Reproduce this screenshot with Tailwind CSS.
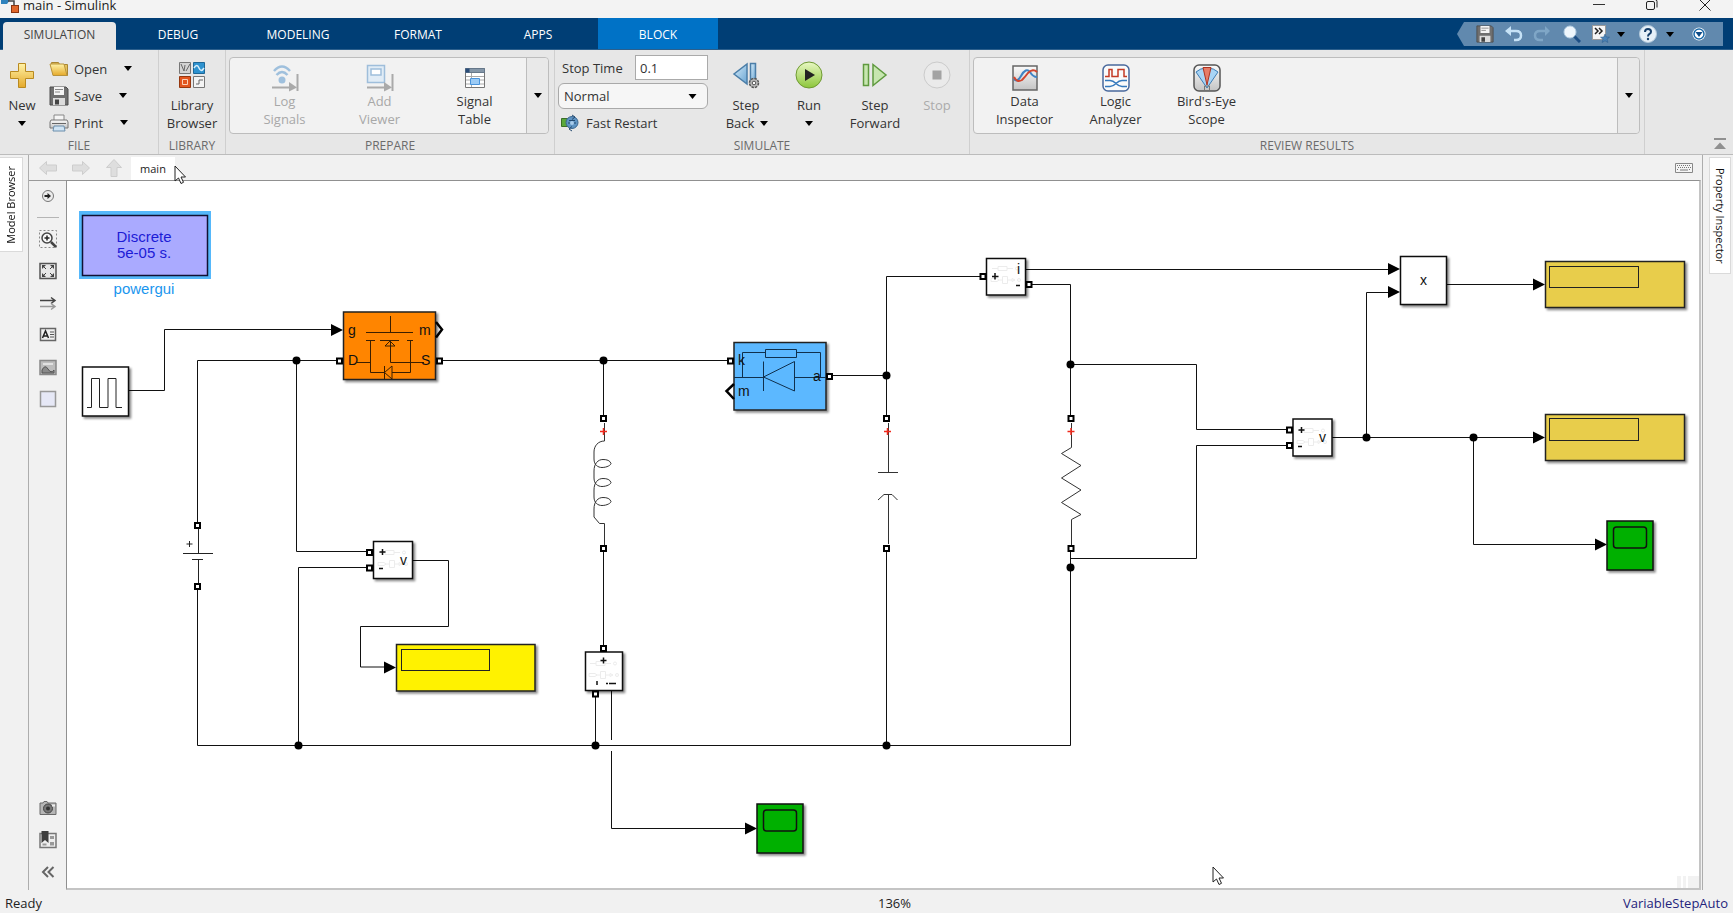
<!DOCTYPE html>
<html lang="en">

<head>
  <meta charset="UTF-8" />
  <meta name="viewport" content="width=device-width, initial-scale=1.0" />
  <title>main - Simulink</title>
  <script src="https://cdn.jsdelivr.net/npm/@tailwindcss/browser@4"></script>
</head>

<body class="h-screen flex flex-col overflow-hidden bg-[#f1f1f1] text-[13px] leading-[18px] text-[#333] font-['Open_Sans','Noto_Sans',sans-serif]">
  <!-- Shared icon parts -->
  <svg class="absolute w-0 h-0">
    <defs>
      <linearGradient id="gold" x1="0" y1="0" x2="0" y2="1">
        <stop offset="0" stop-color="#fff3a8" />
        <stop offset="1" stop-color="#e5a92a" />
      </linearGradient>
      <linearGradient id="blue" x1="0" y1="0" x2="1" y2="1">
        <stop offset="0" stop-color="#d5ecfa" />
        <stop offset="1" stop-color="#69a5d3" />
      </linearGradient>
      <linearGradient id="green" x1="0" y1="0" x2="0" y2="1">
        <stop offset="0" stop-color="#e9f8c4" />
        <stop offset="1" stop-color="#8cc63a" />
      </linearGradient>
      <linearGradient id="gray" x1="0" y1="0" x2="0" y2="1">
        <stop offset="0" stop-color="#fafafa" />
        <stop offset="1" stop-color="#c4c4c4" />
      </linearGradient>
      <filter id="shadow" x="-20%" y="-20%" width="150%" height="150%">
        <feDropShadow dx="2" dy="2" stdDeviation="1.2" flood-color="#000" flood-opacity="0.45" />
      </filter>
      <symbol id="caret" viewBox="0 0 8 5">
        <path d="M0 0h8L4 5z" fill="#000" />
      </symbol>
      <symbol id="floppy" viewBox="0 0 20 20">
        <path d="M1 1h16l2 2v16H1z" fill="#6f6f6f" stroke="#4d4d4d" />
        <path d="M5 1h10v8H5z" fill="#f4f4f4" />
        <path d="M6 3.500h8M6 6h5" stroke="#888" />
        <path d="M4 12h12v7H4z" fill="#dcdcdc" />
        <path d="M6 13.500h4v5H6z" fill="#444" />
      </symbol>
      <symbol id="pointer" viewBox="0 0 12 20">
        <path d="M1 1v15l3.500-3 2.500 5.500 2.500-1.200L7 12h4.500z" fill="#fff" stroke="#222" />
      </symbol>
      <g id="port">
        <rect x="-3.500" y="-3.500" width="7" height="7" fill="#000" />
        <rect x="-1.500" y="-1.500" width="3" height="3" fill="#fff" />
      </g>
      <circle id="dot" r="4" fill="#000" />
      <path id="arrow" d="M-12-6L0 0l-12 6z" fill="#000" />
      <g id="sensor" fill="none" stroke="#ececec">
        <path d="M5 11.500h6M11 9.500h9v4h-9zM20 11.500h6" />
        <circle cx="30" cy="11.500" r="1.500" />
        <path d="M4 21.500h6l2 1.500-2 1.500H4zM12 23h3M15.500 19.500h5v7h-5zM21 23h4M25 21.500l3 1.500-3 1.500z" />
        <circle cx="32" cy="23" r="1.500" />
      </g>
      <g id="scope">
        <rect width="46" height="49" fill="#00b000" stroke="#111" stroke-width="1.500" filter="url(#shadow)" />
        <rect x="6.500" y="6" width="33" height="21" rx="3" fill="none" stroke="#111" stroke-width="1.500" />
      </g>
    </defs>
  </svg>

  <!-- Title bar -->
  <header class="h-[18px] shrink-0 flex items-start bg-[#f3f3f3] text-[#222]">
    <svg class="w-[18px] h-[14px] ml-[1px]" viewBox="0 0 18 14">
      <path d="M0 0h9l-3 4H0z" fill="#2f83bd" />
      <path d="M7 1h6v4" fill="none" stroke="#444" stroke-width="1.500" />
      <rect x="10.500" y="5.500" width="7" height="7" fill="#e0662a" stroke="#8b3510" />
    </svg>
    <h1 class="flex-1 pl-1 leading-[10px]">main - Simulink</h1>
    <div class="flex pr-[22px] gap-[41px]">
      <button aria-label="Minimize"><svg class="w-3 h-3" viewBox="0 0 12 12"><path d="M0 4.500h12" stroke="#333" /></svg></button>
      <button aria-label="Restore"><svg class="w-3 h-3" viewBox="0 0 12 12" fill="none" stroke="#222"><rect x=".5" y="1.500" width="8" height="8" rx="1.500" /><path d="M3-.5h6a2 2 0 012 2v6" /></svg></button>
      <button aria-label="Close"><svg class="w-3 h-3" viewBox="0 0 12 12"><path d="M.5-.5l11 11M11.500-.5l-11 11" stroke="#222" /></svg></button>
    </div>
  </header>

  <!-- Tabs -->
  <nav class="h-8 shrink-0 flex items-stretch bg-[#003e75] border-b border-[#2c5f8c] text-[12px] text-white">
    <button class="ml-[3px] mr-[2px] mt-1 -mb-px pb-[2px] w-[113px] rounded-t-sm bg-[#e7e7e7] text-[#444]">SIMULATION</button>
    <button class="w-[120px] pt-[2px]">DEBUG</button>
    <button class="w-[120px] pt-[2px]">MODELING</button>
    <button class="w-[120px] pt-[2px]">FORMAT</button>
    <button class="w-[120px] pt-[2px]">APPS</button>
    <button class="w-[120px] pt-[2px] bg-[#0072c6]">BLOCK</button>

    <!-- Quick access -->
    <div class="ml-auto mr-[10px] mt-1 mb-[3px] w-[266px] pl-[18px] flex items-center bg-[#6189ae] [clip-path:polygon(0_50%,7px_0,100%_0,100%_100%,7px_100%)]">
      <button aria-label="Save model"><svg class="w-5 h-[18px]"><use href="#floppy" /></svg></button>
      <button class="ml-[10px]" aria-label="Undo"><svg class="w-[18px] h-[18px]" viewBox="0 0 18 18"><path d="M2 6h9q5 0 5 4.500T11 15H9" fill="none" stroke="#c6e2f6" stroke-width="2.500" /><path d="M6 1L0 6l6 5z" fill="#c6e2f6" /></svg></button>
      <button class="ml-[10px]" aria-label="Redo"><svg class="w-[18px] h-[18px]" viewBox="0 0 18 18"><path d="M15 6H7Q2 6 2 10.500T7 15h3" fill="none" stroke="#7fa6c6" stroke-width="2.500" /><path d="M12 1l5 5-5 5z" fill="#7fa6c6" /></svg></button>
      <button class="ml-3" aria-label="Search"><svg class="w-[18px] h-[18px]" viewBox="0 0 18 18"><path d="M10 10l7 7" stroke="#1d4f85" stroke-width="3" /><circle cx="7" cy="7" r="6" fill="#eef6fc" stroke="#b5cfe4" /></svg></button>
      <button class="ml-[11px] flex items-center gap-[7px]" aria-label="Favorites">
        <svg class="w-[18px] h-[18px]" viewBox="0 0 18 18"><rect x=".5" y=".5" width="13" height="14" fill="#f6f6f6" stroke="#9a9a9a" /><path d="M3 3l3 3-3 3M7 3l3 3-3 3" fill="none" stroke="#222" stroke-width="1.500" /><path d="M13 9l1.300 3 3.200.2-2.500 2 .9 3.300-2.900-1.800-2.900 1.800.9-3.300-2.500-2 3.200-.2z" fill="#4a83b8" stroke="#2b5a8a" stroke-width=".5" /></svg>
        <svg class="w-2 h-[5px]"><use href="#caret" /></svg>
      </button>
      <button class="ml-[14px] flex items-center gap-[9px]" aria-label="Help">
        <svg class="w-[18px] h-[18px]" viewBox="0 0 18 18"><circle cx="9" cy="9" r="8.500" fill="#e6f0f8" stroke="#b3c8da" /><path d="M6 7q0-3 3-3t3 2.700q0 1.300-1.500 2.200T9 11.500" fill="none" stroke="#163f6b" stroke-width="2" /><circle cx="9" cy="14" r="1.200" fill="#163f6b" /></svg>
        <svg class="w-2 h-[5px]"><use href="#caret" /></svg>
      </button>
      <button class="ml-[18px]" aria-label="Quick access options"><svg class="w-[14px] h-[14px]" viewBox="0 0 14 14"><circle cx="7" cy="7" r="6.500" fill="#fff" /><circle cx="7" cy="7" r="5" fill="#fff" stroke="#1c6aa8" stroke-width="1.500" /><path d="M3.500 5h7L7 10z" fill="#0b4a86" /></svg></button>
    </div>
  </nav>

  <!-- Toolstrip -->
  <section class="h-[105px] shrink-0 flex bg-[#e7e7e7] border-b border-[#bcbcbc]">
    <!-- File -->
    <div class="w-[159px] flex flex-col border-r border-[#cfcfcf]">
      <div class="flex-1 flex">
        <button class="w-11 pt-[11px] flex flex-col items-center justify-start">
          <svg class="w-7 h-7" viewBox="0 0 28 28"><path d="M10.500 2.500h7v8h8v7h-8v9h-7v-9h-8v-7h8z" fill="url(#gold)" stroke="#b98a20" /></svg>
          <span class="mt-[7px]">New</span>
          <svg class="mt-[7px] w-2 h-[5px]"><use href="#caret" /></svg>
        </button>
        <div class="pt-[5px] pl-[5px]">
          <button class="h-[27px] flex items-center">
            <svg class="w-5 h-5" viewBox="0 0 20 20"><path d="M2.500 3.500h7l1 2h8v11h-14z" fill="#e5c25c" stroke="#a98633" /><path d="M1 5h14l3 11.500H4z" fill="url(#gold)" stroke="#b9933b" /></svg>
            <span class="pl-[5px]">Open</span>
            <svg class="ml-[17px] w-2 h-[5px]"><use href="#caret" /></svg>
          </button>
          <button class="h-[27px] flex items-center">
            <svg class="w-5 h-5"><use href="#floppy" /></svg>
            <span class="pl-[5px]">Save</span>
            <svg class="ml-[17px] w-2 h-[5px]"><use href="#caret" /></svg>
          </button>
          <button class="h-[27px] flex items-center">
            <svg class="w-5 h-5" viewBox="0 0 20 20"><path d="M5 2h10v6H5z" fill="#f5f5f5" stroke="#888" /><path d="M2 7h16l1 2v6H1V9z" fill="url(#gray)" stroke="#777" /><path d="M3 10.500h14" stroke="#666" /><path d="M5 13h10l1 5H4z" fill="#cfe3f3" stroke="#6b8eac" /></svg>
            <span class="pl-[5px]">Print</span>
            <svg class="ml-[17px] w-2 h-[5px]"><use href="#caret" /></svg>
          </button>
        </div>
      </div>
      <h2 class="h-[17px] text-center text-[12px] leading-[18px] text-[#6b6b6b]">FILE</h2>
    </div>

    <!-- Library -->
    <div class="w-[67px] flex flex-col border-r border-[#cfcfcf]">
      <button class="flex-1 pt-[11px] flex flex-col items-center justify-start">
        <svg class="w-7 h-7" viewBox="0 0 28 28">
          <g stroke="#777"><path d="M1.500 1.500h11v11h-11z" fill="#d3d3d3" /><path d="M15.500 1.500h11v11h-11z" fill="#2e92cf" stroke="#1d6797" /><path d="M1.500 15.500h11v11h-11z" fill="#e2561f" stroke="#96370f" /><path d="M15.500 15.500h11v11h-11z" fill="#f4f4f4" /></g>
          <path d="M3 3l3 7M6 10l1-6M8 10l4-7M18 23h3v-4h4" fill="none" stroke="#666" /><path d="M16 7q3-5 5 0t5 0" fill="none" stroke="#d8effc" stroke-width="1.500" /><path d="M4.500 18.500h5v5h-5z" fill="none" stroke="#fbd0b8" />
        </svg>
        <span class="mt-[7px]">Library<br />Browser</span>
      </button>
      <h2 class="h-[17px] text-center text-[12px] leading-[18px] text-[#6b6b6b]">LIBRARY</h2>
    </div>

    <!-- Prepare -->
    <div class="w-[329px] flex flex-col border-r border-[#cfcfcf]">
      <div class="flex-1">
        <div class="mt-[7px] ml-[3px] mr-[5px] h-[77px] flex border border-[#bdbdbd] rounded bg-[#f2f2f2]">
          <div class="flex-1 flex pl-[7px] pr-[4px]">
            <button class="flex-1 pt-[6px] flex flex-col items-center justify-start text-[#a8a8a8]" disabled>
              <svg class="w-7 h-7" viewBox="0 0 28 28" fill="none"><path d="M3 7q8-9 16 0M5.500 11q5.500-6 11 0" stroke="#9fc0dd" stroke-width="2.500" /><circle cx="11" cy="16" r="3.500" fill="#9fc0dd" /><path d="M1 23.500h17M26.500 10v17" stroke="#aaa" stroke-width="2" /><path d="M18 18l8 5.500-8 4z" fill="#aaa" /></svg>
              <span>Log<br />Signals</span>
            </button>
            <button class="flex-1 pt-[6px] flex flex-col items-center justify-start text-[#a8a8a8]" disabled>
              <svg class="w-7 h-7" viewBox="0 0 28 28" fill="none"><path d="M1.500 1.500h17v17h-17z" fill="#e1ecf6" stroke="#9fbedb" stroke-width="1.500" /><path d="M5 5h10v6H5z" fill="#fff" stroke="#9fbedb" stroke-width="1.500" /><path d="M1 23.500h17M26.500 10v17" stroke="#aaa" stroke-width="2" /><path d="M18 18l8 5.500-8 4z" fill="#aaa" /></svg>
              <span>Add<br />Viewer</span>
            </button>
            <button class="flex-1 pt-[6px] flex flex-col items-center justify-start">
              <svg class="w-7 h-7" viewBox="0 0 28 28"><path d="M4.500 4.500h19v19h-19z" fill="#fff" stroke="#777" /><path d="M4.500 4.500h19v4h-19z" fill="#8496a8" stroke="#66788a" /><path d="M4.500 4.500h4v4h-4z" fill="#2a4d78" /><path d="M5 12.500h18M5 16h18M5 20h18M10.500 9v14" stroke="#aaa" /><path d="M9.500 14.500h9v6h-9z" fill="#9ccbf5" stroke="#4a94dc" /></svg>
              <span>Signal<br />Table</span>
            </button>
          </div>
          <button class="w-[22px] flex items-center justify-center border-l border-[#bdbdbd] bg-[#e9e9e9] rounded-r" aria-label="More prepare tools"><svg class="w-2 h-[5px]"><use href="#caret" /></svg></button>
        </div>
      </div>
      <h2 class="h-[17px] text-center text-[12px] leading-[18px] text-[#6b6b6b]">PREPARE</h2>
    </div>

    <!-- Simulate -->
    <div class="w-[415px] flex flex-col border-r border-[#cfcfcf]">
      <div class="flex-1 flex pl-[3px]">
        <div class="w-[150px] pt-[5px] flex flex-col gap-[3px]">
          <div class="flex items-center justify-between">
            <label for="stopTime" class="pl-1">Stop Time</label>
            <input id="stopTime" type="text" value="0.1" class="w-[73px] h-[25px] px-1 bg-white border border-[#aaa]" />
          </div>
          <div class="relative">
            <select aria-label="Simulation mode" class="appearance-none w-full h-[26px] px-[5px] bg-[#f6f6f6] border border-[#a9a9a9] rounded-md">
              <option>Normal</option>
            </select>
            <svg class="absolute right-[11px] top-[11px] w-[9px] h-[5px] pointer-events-none"><use href="#caret" /></svg>
          </div>
          <button class="h-[22px] flex items-center gap-[7px] pl-[3px]">
            <svg class="w-[18px] h-[18px]" viewBox="0 0 18 18"><path d="M.5 4.500h6v8h-6z" fill="#5aa83a" stroke="#3b6e28" /><circle cx="11" cy="8.500" r="6" fill="#5e93c2" stroke="#39658e" /><path d="M11 1l3 2-3 2.500M11 17l-3-2 3-2.500M7 9h8M8 6.500h6" fill="none" stroke="#23496f" /><circle cx="11" cy="9" r="2" fill="#a9cdec" /></svg>
            <span>Fast Restart</span>
          </button>
        </div>
        <button class="ml-[3px] w-[70px] pt-[11px] flex flex-col items-center justify-start">
          <svg class="w-7 h-7" viewBox="0 0 28 28"><path d="M15 3v20L2 13z" fill="url(#blue)" stroke="#4b7ea8" stroke-width="1.500" /><path d="M18.500 2.500h5v20h-5z" fill="url(#blue)" stroke="#4b7ea8" stroke-width="1.500" /><circle cx="22" cy="22" r="4.500" fill="#bbb" stroke="#555" stroke-width="1.500" stroke-dasharray="2.500 1" /><circle cx="22" cy="22" r="1.800" fill="#fff" stroke="#555" /></svg>
          <span class="mt-[7px]">Step</span>
          <span class="flex items-center gap-[6px] pl-[2px]">Back <svg class="w-2 h-[5px]"><use href="#caret" /></svg></span>
        </button>
        <button class="w-[56px] pt-[11px] flex flex-col items-center justify-start">
          <svg class="w-7 h-7" viewBox="0 0 28 28"><circle cx="14" cy="14" r="13" fill="url(#green)" stroke="#6f9a32" /><path d="M10 8l10 6-10 6z" fill="#222" /></svg>
          <span class="mt-[7px]">Run</span>
          <svg class="mt-[7px] w-2 h-[5px]"><use href="#caret" /></svg>
        </button>
        <button class="w-[76px] pt-[11px] flex flex-col items-center justify-start">
          <svg class="w-7 h-7" viewBox="0 0 28 28"><path d="M2.500 3.500h5v21h-5zM12 3.500v21L25 14z" fill="#c7e6b0" stroke="#5f9a3f" stroke-width="1.500" /></svg>
          <span class="mt-[7px]">Step<br />Forward</span>
        </button>
        <button class="w-12 pt-[11px] flex flex-col items-center justify-start text-[#ababab]" disabled>
          <svg class="w-7 h-7" viewBox="0 0 28 28"><circle cx="14" cy="14" r="13" fill="#eaeaea" stroke="#cbcbcb" /><path d="M9.500 9.500h9v9h-9z" fill="#a3a3a3" /></svg>
          <span class="mt-[7px]">Stop</span>
        </button>
      </div>
      <h2 class="h-[17px] text-center text-[12px] leading-[18px] text-[#6b6b6b]">SIMULATE</h2>
    </div>

    <!-- Review results -->
    <div class="flex-1 flex flex-col border-r border-[#cfcfcf]">
      <div class="flex-1">
        <div class="mt-[7px] ml-[3px] mr-1 h-[77px] flex border border-[#bdbdbd] rounded bg-[#f2f2f2]">
          <div class="flex-1 flex pl-[5px]">
            <button class="w-[91px] pt-[6px] flex flex-col items-center justify-start">
              <svg class="w-7 h-7" viewBox="0 0 28 28" fill="none"><path d="M2 2h24v24H2z" fill="url(#gray)" stroke="#666" stroke-width="1.500" /><path d="M3 15q3 4 7-3 5-9 9-4 3 5 7 5" stroke="#3f84c4" stroke-width="2" /><path d="M3 13q3 6 8 3 3-3 6-7 5-5 9-1" stroke="#d2462f" stroke-width="2" /></svg>
              <span>Data<br />Inspector</span>
            </button>
            <button class="w-[91px] pt-[6px] flex flex-col items-center justify-start">
              <svg class="w-7 h-7" viewBox="0 0 28 28" fill="none"><rect x="1" y="1" width="26" height="26" rx="5" fill="#fafafa" stroke="#48689c" stroke-width="1.500" /><path d="M3 12.500h4v-7h3v7h6v-7h6v7h3" stroke="#c43a25" stroke-width="1.500" /><path d="M3 16.500h5q3 0 6 3t6 3h5M3 22.500h5q3 0 6-3t6-3h5" stroke="#3579bd" stroke-width="1.500" /></svg>
              <span>Logic<br />Analyzer</span>
            </button>
            <button class="w-[91px] pt-[6px] flex flex-col items-center justify-start">
              <svg class="w-7 h-7" viewBox="0 0 28 28"><rect x="1" y="1" width="26" height="26" rx="5" fill="url(#gray)" stroke="#555" stroke-width="1.500" /><path d="M3 8q4-4 11-4t11 4L14 24z" fill="#a8d4f5" stroke="#3d7db5" /><path d="M10 3.500h8L14 21z" fill="#e77b66" stroke="#ad3320" /><path d="M11.500 26v-4h5v4" fill="none" stroke="#777" /></svg>
              <span>Bird's-Eye<br />Scope</span>
            </button>
          </div>
          <button class="w-[22px] flex items-center justify-center border-l border-[#bdbdbd] bg-[#e9e9e9] rounded-r" aria-label="More review tools"><svg class="w-2 h-[5px]"><use href="#caret" /></svg></button>
        </div>
      </div>
      <h2 class="h-[17px] text-center text-[12px] leading-[18px] text-[#6b6b6b]">REVIEW RESULTS</h2>
    </div>
    <div class="w-[88px] flex items-end justify-end pr-[7px] pb-1">
      <button aria-label="Collapse toolstrip"><svg class="w-3 h-3" viewBox="0 0 12 12" fill="#909090"><path d="M0 0h12v2H0zM6 4.500L12 11H0z" /></svg></button>
    </div>
  </section>

  <!-- Workspace -->
  <div class="flex-1 min-h-0 flex">
    <aside class="w-[29px] shrink-0 pt-[2px] border-r border-[#adadad]">
      <button class="w-[23px] h-[95px] flex items-center justify-center bg-white border border-l-0 border-[#dadada] text-[11px] text-[#111]"><span class="[writing-mode:vertical-rl] rotate-180">Model Browser</span></button>
    </aside>

    <main class="flex-1 min-w-0 flex flex-col">
      <!-- Path bar -->
      <div class="h-[25px] shrink-0 flex items-center pl-[10px]">
        <svg class="w-[18px] h-4" viewBox="0 0 18 16"><path d="M.5 8l7-6.500V5h10v6h-10v3.500z" fill="#dedede" stroke="#cdcdcd" /></svg>
        <svg class="ml-[15px] w-[18px] h-4" viewBox="0 0 18 16"><path d="M17.500 8l-7-6.500V5H.5v6h10v3.500z" fill="#dedede" stroke="#cdcdcd" /></svg>
        <svg class="ml-4 w-4 h-[18px]" viewBox="0 0 16 18"><path d="M8 .5l7.500 8H11v9H5v-9H.5z" fill="#dedede" stroke="#cdcdcd" /></svg>
        <button class="ml-[9px] mt-[2px] w-11 h-[23px] bg-white text-[11px] text-[#222]">main</button>
        <button class="ml-auto mr-[9px]" aria-label="Keyboard"><svg class="w-[18px] h-[10px]" viewBox="0 0 18 10"><path d="M.5.5h17v9H.5z" fill="#f5f5f5" stroke="#888" /><path d="M2 2.500h14M3 4.500h13M2 6.500h2M14 6.500h2" stroke="#777" stroke-dasharray="1 1" /><path d="M5 7h8" stroke="#777" /></svg></button>
      </div>

      <div class="flex-1 min-h-0 flex">
        <!-- Palette -->
        <div class="w-[37px] shrink-0 pt-[6px] pb-[9px] flex flex-col items-center border-t border-[#999]">
          <button aria-label="Show browser"><svg class="w-[18px] h-[18px]" viewBox="0 0 18 18"><circle cx="9" cy="9" r="5.500" fill="#ececec" stroke="#777" /><path d="M5.500 9h4" stroke="#222" stroke-width="2" /><path d="M8.500 6l3.500 3-3.500 3z" fill="#222" /></svg></button>
          <hr class="my-3 w-[22px] border-[#b5b5b5]" />
          <div class="flex flex-col gap-[14px]">
            <button aria-label="Zoom"><svg class="w-[18px] h-[18px]" viewBox="0 0 18 18" fill="none"><path d="M.5.5h17v17H.5z" stroke="#888" stroke-dasharray="2 2" /><circle cx="8" cy="8" r="5" fill="#f8f8f8" stroke="#444" stroke-width="1.500" /><path d="M5.500 8h5M8 5.500v5" stroke="#222" stroke-width="1.500" /><path d="M12 12l5 5" stroke="#444" stroke-width="2.500" /></svg></button>
            <button aria-label="Fit to view"><svg class="w-[18px] h-[18px]" viewBox="0 0 18 18"><path d="M1 1.500h16v15H1z" fill="#e8e8e8" stroke="#555" stroke-width="1.500" /><path d="M3 3h4L3 7zM15 3v4l-4-4zM3 15v-4l4 4zM15 15h-4l4-4z" fill="#444" /><path d="M4 4l3 3M14 4l-3 3M4 14l3-3M14 14l-3-3" stroke="#444" /></svg></button>
            <button aria-label="Signal lines"><svg class="w-[18px] h-[18px]" viewBox="0 0 18 18" fill="none"><path d="M1 6.500h14M12 3.500l4 3-4 3" stroke="#444" stroke-width="1.500" /><path d="M1 12.500h14M12 9.500l4 3-4 3" stroke="#999" stroke-width="1.500" /></svg></button>
            <button aria-label="Annotation"><svg class="w-[18px] h-[18px]" viewBox="0 0 18 18"><path d="M1.500 2.500h15v12h-15z" fill="#f0f0f0" stroke="#666" stroke-width="1.500" /><path d="M3.500 12L6.500 5 9.500 12M4.500 10h4" fill="none" stroke="#222" stroke-width="1.500" /><path d="M11 6h4M11 8.500h4M11 11h4" stroke="#555" /></svg></button>
            <button aria-label="Image"><svg class="w-[18px] h-[18px]" viewBox="0 0 18 18"><path d="M1 2.500h16v14H1z" fill="#bdbdbd" stroke="#888" stroke-width="1.500" /><path d="M4 6h10" stroke="#eee" stroke-width="1.500" /><path d="M3 12q3-6 6-1t6 1v3H3z" fill="#8a8a8a" stroke="#555" /></svg></button>
            <button aria-label="Area"><svg class="w-[18px] h-[18px]" viewBox="0 0 18 18"><path d="M1.500 1.500h15v15h-15z" fill="#e6e8f6" stroke="#999" stroke-width="1.500" /></svg></button>
          </div>
          <div class="mt-auto flex flex-col gap-[14px]">
            <button aria-label="Snapshot"><svg class="w-[18px] h-[18px]" viewBox="0 0 18 18"><path d="M1 4h3l1-1.500h3L9 4h8v11.500H1z" fill="#b5b5b5" stroke="#6a6a6a" /><circle cx="9" cy="9.500" r="4.500" fill="#777" stroke="#444" /><circle cx="9" cy="9.500" r="2" fill="#333" /><path d="M13 5.500h3v2h-3z" fill="#eee" /></svg></button>
            <button aria-label="Bookmarks"><svg class="w-[18px] h-[18px]" viewBox="0 0 18 18"><path d="M1 2.500h16v14H1z" fill="#eee" stroke="#777" stroke-width="1.500" /><path d="M2.500 0h7v12L6 9l-3.500 3z" fill="#3d3d3d" /><path d="M11 5h4v3h-4zM11 11h4v3.500h-4zM3.500 12.500h4v2h-4z" fill="#999" /></svg></button>
            <button aria-label="Hide palette"><svg class="w-[18px] h-[18px]" viewBox="0 0 18 18" fill="none"><path d="M9 4L4 9l5 5M14.500 4l-5 5 5 5" stroke="#666" stroke-width="2" /></svg></button>
          </div>
        </div>

        <!-- Model canvas -->
        <div class="relative flex-1 min-w-0 mr-[1px] overflow-hidden bg-white border-t border-l border-r-2 border-b-2 border-t-[#909090] border-l-[#909090] border-r-[#c4c4c4] border-b-[#c4c4c4]">
          <svg class="absolute inset-0 w-full h-full font-['Liberation_Sans',Arial,sans-serif] text-[14px]" fill="#111">
            <g transform="translate(-67 -181)">
              <!-- Wires -->
              <g fill="none" stroke="#111">
                <path d="M129 390.500h35.500v-61H333" />
                <path d="M336 360.500H197.500V745.500H1070.500V552" />
                <path d="M296.500 360.500V551.500H367" />
                <path d="M298.500 745.500V567.500H367" />
                <path d="M412 560.500h36.500v66h-88v40.500H386" />
                <path d="M443 360.500H728" />
                <path d="M603.500 360.500V416M603.500 552v94" />
                <path d="M832 375.500h54.500M886.500 416V276.500H980M886.500 552V745" />
                <path d="M1026 269.500h364M1032 284.500h38.500V416" />
                <path d="M1070.500 364.500h126v65H1287M1070.500 558.500h126v-113H1287" />
                <path d="M1332 437.500h203M1366.500 437V292.500H1390M1473.500 437V544.500H1597" />
                <path d="M1447 284.500h88M595.500 697v48M611.500 691v137.500H746" />
              </g>
              <!-- Wire crossing gap -->
              <path d="M609 740h5v5h-5zM609 746h5v5h-5z" fill="#fff" />
              <!-- The source hides the wire between its ports -->
              <path d="M195 529h5v54h-5z" fill="#fff" />
              <use href="#dot" x="296.500" y="360.500" />
              <use href="#dot" x="298.500" y="745.500" />
              <use href="#dot" x="603.500" y="360.500" />
              <use href="#dot" x="595.500" y="745.500" />
              <use href="#dot" x="886.500" y="375.500" />
              <use href="#dot" x="886.500" y="745.500" />
              <use href="#dot" x="1070.500" y="364.500" />
              <use href="#dot" x="1070.500" y="567.500" />
              <use href="#dot" x="1366.500" y="437.500" />
              <use href="#dot" x="1473.500" y="437.500" />
              <use href="#arrow" x="343" y="330" />
              <use href="#arrow" x="396" y="667.500" />
              <use href="#arrow" x="757" y="828.500" />
              <use href="#arrow" x="1400" y="269" />
              <use href="#arrow" x="1400" y="292" />
              <use href="#arrow" x="1545" y="284.500" />
              <use href="#arrow" x="1545" y="437.500" />
              <use href="#arrow" x="1607" y="544.500" />

              <!-- powergui -->
              <rect x="79" y="211" width="132" height="68" fill="#55b8fb" />
              <rect x="82.500" y="215.500" width="125" height="60" fill="#aaaaff" stroke="#111133" stroke-width="1.500" />
              <g class="text-[15px]" text-anchor="middle">
                <text x="144" y="242" fill="#1c1cd6">Discrete</text>
                <text x="144" y="258" fill="#1c1cd6">5e-05 s.</text>
                <text x="144" y="294" fill="#1a96ee">powergui</text>
              </g>

              <!-- Pulse generator -->
              <rect x="82.500" y="367" width="46" height="49" fill="#fff" stroke="#111" stroke-width="1.500" filter="url(#shadow)" />
              <path d="M87 407.500h4.500v-29h8v29h8.500v-29h8v29h6" fill="none" stroke="#222" />

              <!-- Mosfet -->
              <rect x="343.500" y="312" width="92" height="67.500" fill="#ff8500" stroke="#222" stroke-width="1.500" filter="url(#shadow)" />
              <path d="M390.500 316v16.500M366 332.500h47M366 340.500h9M380 340.500h19M407 340.500h6M370.500 340.500v32H384M357 362.500h13M410.500 340.500v32H392M384.500 366v13M384.500 372.500l7.500-6.500v13zM390.500 341v21.500H424M390 341l-5 5h10z" fill="none" stroke="#3b1f00" />
              <path d="M436 322l6 7.500-6 8" fill="none" stroke="#000" stroke-width="2.500" />
              <text x="348" y="335">g</text>
              <text x="419" y="335">m</text>
              <text x="348" y="365">D</text>
              <text x="421" y="365">S</text>
              <use href="#port" x="339.500" y="361" />
              <use href="#port" x="439.500" y="361" />

              <!-- Diode -->
              <rect x="734" y="342.500" width="92" height="67.500" fill="#5bb8ff" stroke="#222" stroke-width="1.500" filter="url(#shadow)" />
              <path d="M734 377.500h29.500M742.500 377V352.500H765M765.500 349.500h31v8h-31zM796.500 352.500h24V377M763.500 361.500V391M763.500 377l31-15.500V391zM794.500 377.500H826" fill="none" stroke="#10304d" />
              <path d="M734 384l-7.500 7 7.500 8" fill="none" stroke="#000" stroke-width="2.500" />
              <text x="738" y="365">k</text>
              <text x="738" y="396">m</text>
              <text x="813" y="381">a</text>
              <use href="#port" x="730.500" y="361" />
              <use href="#port" x="829.500" y="376.500" />

              <!-- DC source -->
              <path d="M198.500 529v24M183 553.500h30M192 559.500h11M198.500 560v23M186.500 544h6M189.500 541v6" fill="none" stroke="#222" stroke-width="1" />
              <use href="#port" x="197.500" y="525.500" />
              <use href="#port" x="197.500" y="586.500" />

              <!-- Inductor -->
              <path d="M604.500 423v18C598 441 594 446 594 452v7c0 6 4 8.500 8 8.500 5 0 9-2.500 9-4-1-3-4-4-8-4-5 0-9 4-9 11.500v7c0 6 4 8.500 8 8.500 5 0 9-2.500 9-4-1-3-4-4-8-4-5 0-9 4-9 11.500v7c0 6 4 8.500 8 8.500 5 0 9-2.500 9-4-1-3-4-4-8-4-5 0-9 4-9 11.500V517l5.500 6.500h5V545" fill="none" stroke="#333" />
              <use href="#port" x="603.500" y="418.500" />
              <use href="#port" x="603.500" y="548.500" />

              <!-- Capacitor -->
              <path d="M888.500 423v49M878 472.500h20M878 500l6-5.500h8l5.500 5.500M888.500 495v49" fill="none" stroke="#333" />
              <use href="#port" x="886.500" y="418.500" />
              <use href="#port" x="886.500" y="548.500" />

              <!-- Resistor -->
              <path d="M1071.500 423v24.500l-10 6 19.500 12-19.500 12.500 19.500 12-19.500 12.500 19.500 12-9.500 5V545" fill="none" stroke="#333" />
              <use href="#port" x="1071" y="418.500" />
              <use href="#port" x="1071" y="548.500" />

              <path d="M600 431.500h7M603.500 428v7M884 431.500h7M887.500 428v7M1067.500 431.500h7M1071 428v7" stroke="#f02a1c" stroke-width="1.500" />

              <!-- Input voltage measurement -->
              <rect x="373.500" y="541.500" width="39" height="37" fill="#fff" stroke="#111" stroke-width="1.500" filter="url(#shadow)" />
              <use href="#sensor" x="374" y="541" />
              <path d="M379.500 552h6M382.500 549v6M379 568.500h4" stroke="#111" stroke-width="1.500" />
              <text x="400" y="565">v</text>
              <use href="#port" x="369.500" y="552.500" />
              <use href="#port" x="369.500" y="568" />

              <!-- Load current measurement -->
              <rect x="986.500" y="258.500" width="39" height="36.500" fill="#fff" stroke="#111" stroke-width="1.500" filter="url(#shadow)" />
              <use href="#sensor" x="987" y="257" />
              <path d="M992 276.500h6.500M995 273v6.500M1016 285.500h4" stroke="#111" stroke-width="1.500" />
              <text x="1017" y="274">i</text>
              <use href="#port" x="983" y="276.500" />
              <use href="#port" x="1029" y="284.500" />

              <!-- Output voltage measurement -->
              <rect x="1293" y="419" width="39" height="37" fill="#fff" stroke="#111" stroke-width="1.500" filter="url(#shadow)" />
              <use href="#sensor" x="1293" y="419" />
              <path d="M1298.500 430h6M1301.500 427v6M1298 446.500h4" stroke="#111" stroke-width="1.500" />
              <text x="1319" y="442">v</text>
              <use href="#port" x="1289.500" y="430" />
              <use href="#port" x="1289.500" y="445.500" />

              <!-- Inductor current measurement -->
              <rect x="585.500" y="652" width="37" height="38.500" fill="#fff" stroke="#111" stroke-width="1.500" filter="url(#shadow)" />
              <use href="#sensor" x="585" y="652" />
              <path d="M600.500 660.500h6M603.500 657.500v6M597 681v4M606 683.500h2M609 683.500h7" stroke="#111" stroke-width="1.500" />
              <use href="#port" x="603.500" y="648.500" />
              <use href="#port" x="595.500" y="694" />

              <!-- Product -->
              <rect x="1400.500" y="256.500" width="46" height="48" fill="#fff" stroke="#111" stroke-width="1.500" filter="url(#shadow)" />
              <text x="1420" y="285">x</text>

              <!-- Displays -->
              <g stroke="#222" stroke-width="1.500">
                <rect x="396.500" y="644.500" width="138.500" height="46.500" fill="#fff200" filter="url(#shadow)" />
                <rect x="401.500" y="649.500" width="88" height="21" fill="none" stroke-width="1" />
                <rect x="1545.500" y="261.500" width="139" height="46" fill="#e8cd4b" filter="url(#shadow)" />
                <rect x="1549.500" y="266.500" width="89" height="21" fill="none" stroke-width="1" />
                <rect x="1545.500" y="414.500" width="139" height="46" fill="#e8cd4b" filter="url(#shadow)" />
                <rect x="1549.500" y="418.500" width="89" height="22" fill="none" stroke-width="1" />
              </g>

              <!-- Scopes -->
              <use href="#scope" x="1607" y="521" />
              <use href="#scope" x="757" y="804" />
            </g>
          </svg>
          <svg class="absolute right-0 bottom-0 w-[22px] h-3" viewBox="0 0 22 12"><path d="M0 0h4v12H0zM6 0h3v12H6zM11 0h11v12H11z" fill="#f2f2f2" /></svg>
        </div>
      </div>
    </main>

    <aside class="w-[31px] shrink-0 pt-[2px] pr-[2px] flex justify-end items-start border-l border-[#adadad]">
      <button class="w-[22px] h-[117px] flex items-center justify-center bg-white border border-[#dadada] text-[11px] text-[#111]"><span class="[writing-mode:vertical-rl]">Property Inspector</span></button>
    </aside>
  </div>

  <!-- Status bar -->
  <footer class="h-[23px] shrink-0 flex items-center pt-[2px] px-[5px] text-[#222]">
    <span class="flex-1">Ready</span>
    <span class="pl-14">136%</span>
    <span class="flex-1 text-right text-[#24247c]">VariableStepAuto</span>
  </footer>

  <!-- Mouse pointers -->
  <svg class="absolute left-[174px] top-[165px] w-3 h-5"><use href="#pointer" /></svg>
  <svg class="absolute left-[1212px] top-[866px] w-3 h-5"><use href="#pointer" /></svg>
</body>

</html>
